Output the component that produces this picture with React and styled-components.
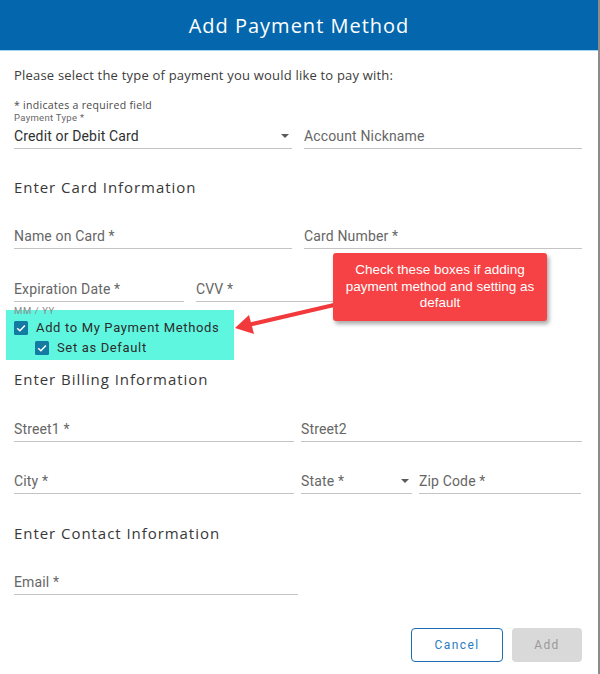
import styled, { createGlobalStyle } from "styled-components";

const GlobalStyle = createGlobalStyle`
  html, body {
    margin: 0;
    padding: 0;
    background: #ffffff;
  }
`;

const Page = styled.div`
  position: relative;
  width: 598px;
  height: 674px;
  border-right: 2px solid #8c8c8c;
  background: #ffffff;
  overflow: hidden;
`;

const Header = styled.div`
  height: 50px;
  background: #0467ad;
  border-bottom: 1px solid #a8d2ef;
  display: flex;
  align-items: center;
  justify-content: center;
  color: #ffffff;
  font-family: "Open Sans", sans-serif;
  font-size: 20px;
  letter-spacing: 1px;
`;

const Body = styled.div`
  padding: 0 16px 0 14px;
`;

const Intro = styled.p`
  margin: 14px 0 0;
  font-family: "Open Sans", sans-serif;
  font-size: 13px;
  line-height: 20px;
  letter-spacing: 0.2px;
  color: #3c3c3c;
`;

const Note = styled.div`
  margin-top: ${(p) => p.$top || 0}px;
  font-family: ${(p) => (p.$roboto ? "Roboto" : '"Open Sans"')}, sans-serif;
  font-size: ${(p) => p.$size}px;
  line-height: ${(p) => p.$line}px;
  letter-spacing: 0.3px;
  color: ${(p) => p.$color || "#555"};
`;

const SectionTitle = styled.h2`
  margin: ${(p) => p.$top}px 0 0;
  font-family: "Open Sans", sans-serif;
  font-weight: 400;
  font-size: 15px;
  line-height: 22px;
  letter-spacing: 0.95px;
  color: #383838;
`;

const Row = styled.div`
  display: flex;
  gap: ${(p) => p.$gap || 12}px;
  margin-top: ${(p) => p.$top || 0}px;
`;

const Field = styled.div`
  position: relative;
  width: ${(p) => p.$w}px;
  flex: none;
  height: 22px;
  border-bottom: 1.5px solid #c4c4c4;
  font-family: Roboto, sans-serif;
  font-size: 14px;
  line-height: 20px;
  letter-spacing: 0.15px;
  color: ${(p) => (p.$filled ? "#2f2f2f" : "#666")};
`;

const Caret = styled.span`
  position: absolute;
  right: 3px;
  top: 8px;
  width: 0;
  height: 0;
  border-left: 4px solid transparent;
  border-right: 4px solid transparent;
  border-top: 4px solid #5a5a5a;
`;

const Helper = styled.div`
  position: relative;
  z-index: 1;
  height: 4px;
  margin-top: 4px;
  font-family: Roboto, sans-serif;
  font-size: 9.5px;
  line-height: 10px;
  letter-spacing: 0.6px;
  color: #8a8a8a;
`;

const Highlight = styled.div`
  width: 228px;
  margin-left: -8px;
  padding: 11px 0 5px 8px;
  box-sizing: border-box;
  background: #5ff6e0;
  display: flex;
  flex-direction: column;
  gap: 6px;
`;

const CheckRow = styled.label`
  display: flex;
  align-items: center;
  gap: 8px;
  padding-left: ${(p) => p.$indent || 0}px;
  font-family: Roboto, sans-serif;
  font-size: 13px;
  line-height: 14px;
  letter-spacing: 0.65px;
  color: #2c2c2c;
`;

const Actions = styled.div`
  display: flex;
  justify-content: flex-end;
  gap: 9px;
  margin-top: 33px;
`;

const Button = styled.button`
  height: 34px;
  width: ${(p) => p.$w}px;
  border-radius: 4px;
  box-sizing: border-box;
  font-family: Roboto, sans-serif;
  font-size: 12px;
  letter-spacing: 1.4px;
  cursor: pointer;
  border: ${(p) => (p.$outline ? "1.5px solid #1a6db3" : "none")};
  background: ${(p) => (p.$outline ? "#ffffff" : "#d9d9d9")};
  color: ${(p) => (p.$outline ? "#2a7cc2" : "#9a9a9a")};
`;

const Callout = styled.div`
  position: absolute;
  left: 333px;
  top: 253px;
  width: 214px;
  height: 68px;
  box-sizing: border-box;
  padding: 9px 6px;
  background: #f64245;
  border-radius: 3px;
  box-shadow: 2px 3px 4px rgba(0, 0, 0, 0.35);
  color: #ffffff;
  font-family: "Liberation Sans", Arial, sans-serif;
  font-size: 13.5px;
  line-height: 16.5px;
  text-align: center;
`;

const Pointer = styled.svg`
  position: absolute;
  left: 230px;
  top: 295px;
  overflow: visible;
`;

function CheckBox() {
  return (
    <svg width="14" height="14" viewBox="0 0 14 14">
      <rect width="14" height="14" rx="1.5" fill="#137aa1" />
      <path d="M3.2 7.2 L5.9 9.8 L10.9 4.4" fill="none" stroke="#ffffff" strokeWidth="1.5" />
    </svg>
  );
}

function App() {
  return (
    <Page>
      <GlobalStyle />
      <Header>Add Payment Method</Header>
      <Body>
        <Intro>Please select the type of payment you would like to pay with:</Intro>
        <Note $top={14} $size={10.5} $line={13} $color="#4a4a4a">
          * indicates a required field
        </Note>
        <Note $roboto $size={9.5} $line={11} $color="#666">
          Payment Type *
        </Note>
        <Row $top={3}>
          <Field $w={278} $filled>
            Credit or Debit Card
            <Caret />
          </Field>
          <Field $w={278}>Account Nickname</Field>
        </Row>

        <SectionTitle $top={27}>Enter Card Information</SectionTitle>
        <Row $top={28}>
          <Field $w={278}>Name on Card *</Field>
          <Field $w={278}>Card Number *</Field>
        </Row>
        <Row $top={30}>
          <Field $w={170}>Expiration Date *</Field>
          <Field $w={170}>CVV *</Field>
        </Row>
        <Helper>MM / YY</Helper>
        <Highlight>
          <CheckRow>
            <CheckBox />
            Add to My Payment Methods
          </CheckRow>
          <CheckRow $indent={21}>
            <CheckBox />
            Set as Default
          </CheckRow>
        </Highlight>

        <SectionTitle $top={8}>Enter Billing Information</SectionTitle>
        <Row $top={29} $gap={7}>
          <Field $w={280}>Street1 *</Field>
          <Field $w={281}>Street2</Field>
        </Row>
        <Row $top={29} $gap={7}>
          <Field $w={280}>City *</Field>
          <Field $w={111}>
            State *
            <Caret />
          </Field>
          <Field $w={162}>Zip Code *</Field>
        </Row>

        <SectionTitle $top={28}>Enter Contact Information</SectionTitle>
        <Row $top={28}>
          <Field $w={284}>Email *</Field>
        </Row>

        <Actions>
          <Button $outline $w={92}>Cancel</Button>
          <Button $w={70}>Add</Button>
        </Actions>
      </Body>

      <Pointer width="104" height="40">
        <line x1="104" y1="10" x2="18" y2="30" stroke="#f2393c" strokeWidth="4" />
        <polygon points="5,33 19,20 24,39" fill="#f2393c" />
      </Pointer>
      <Callout>Check these boxes if adding payment method and setting as default</Callout>
    </Page>
  );
}

export default App;
